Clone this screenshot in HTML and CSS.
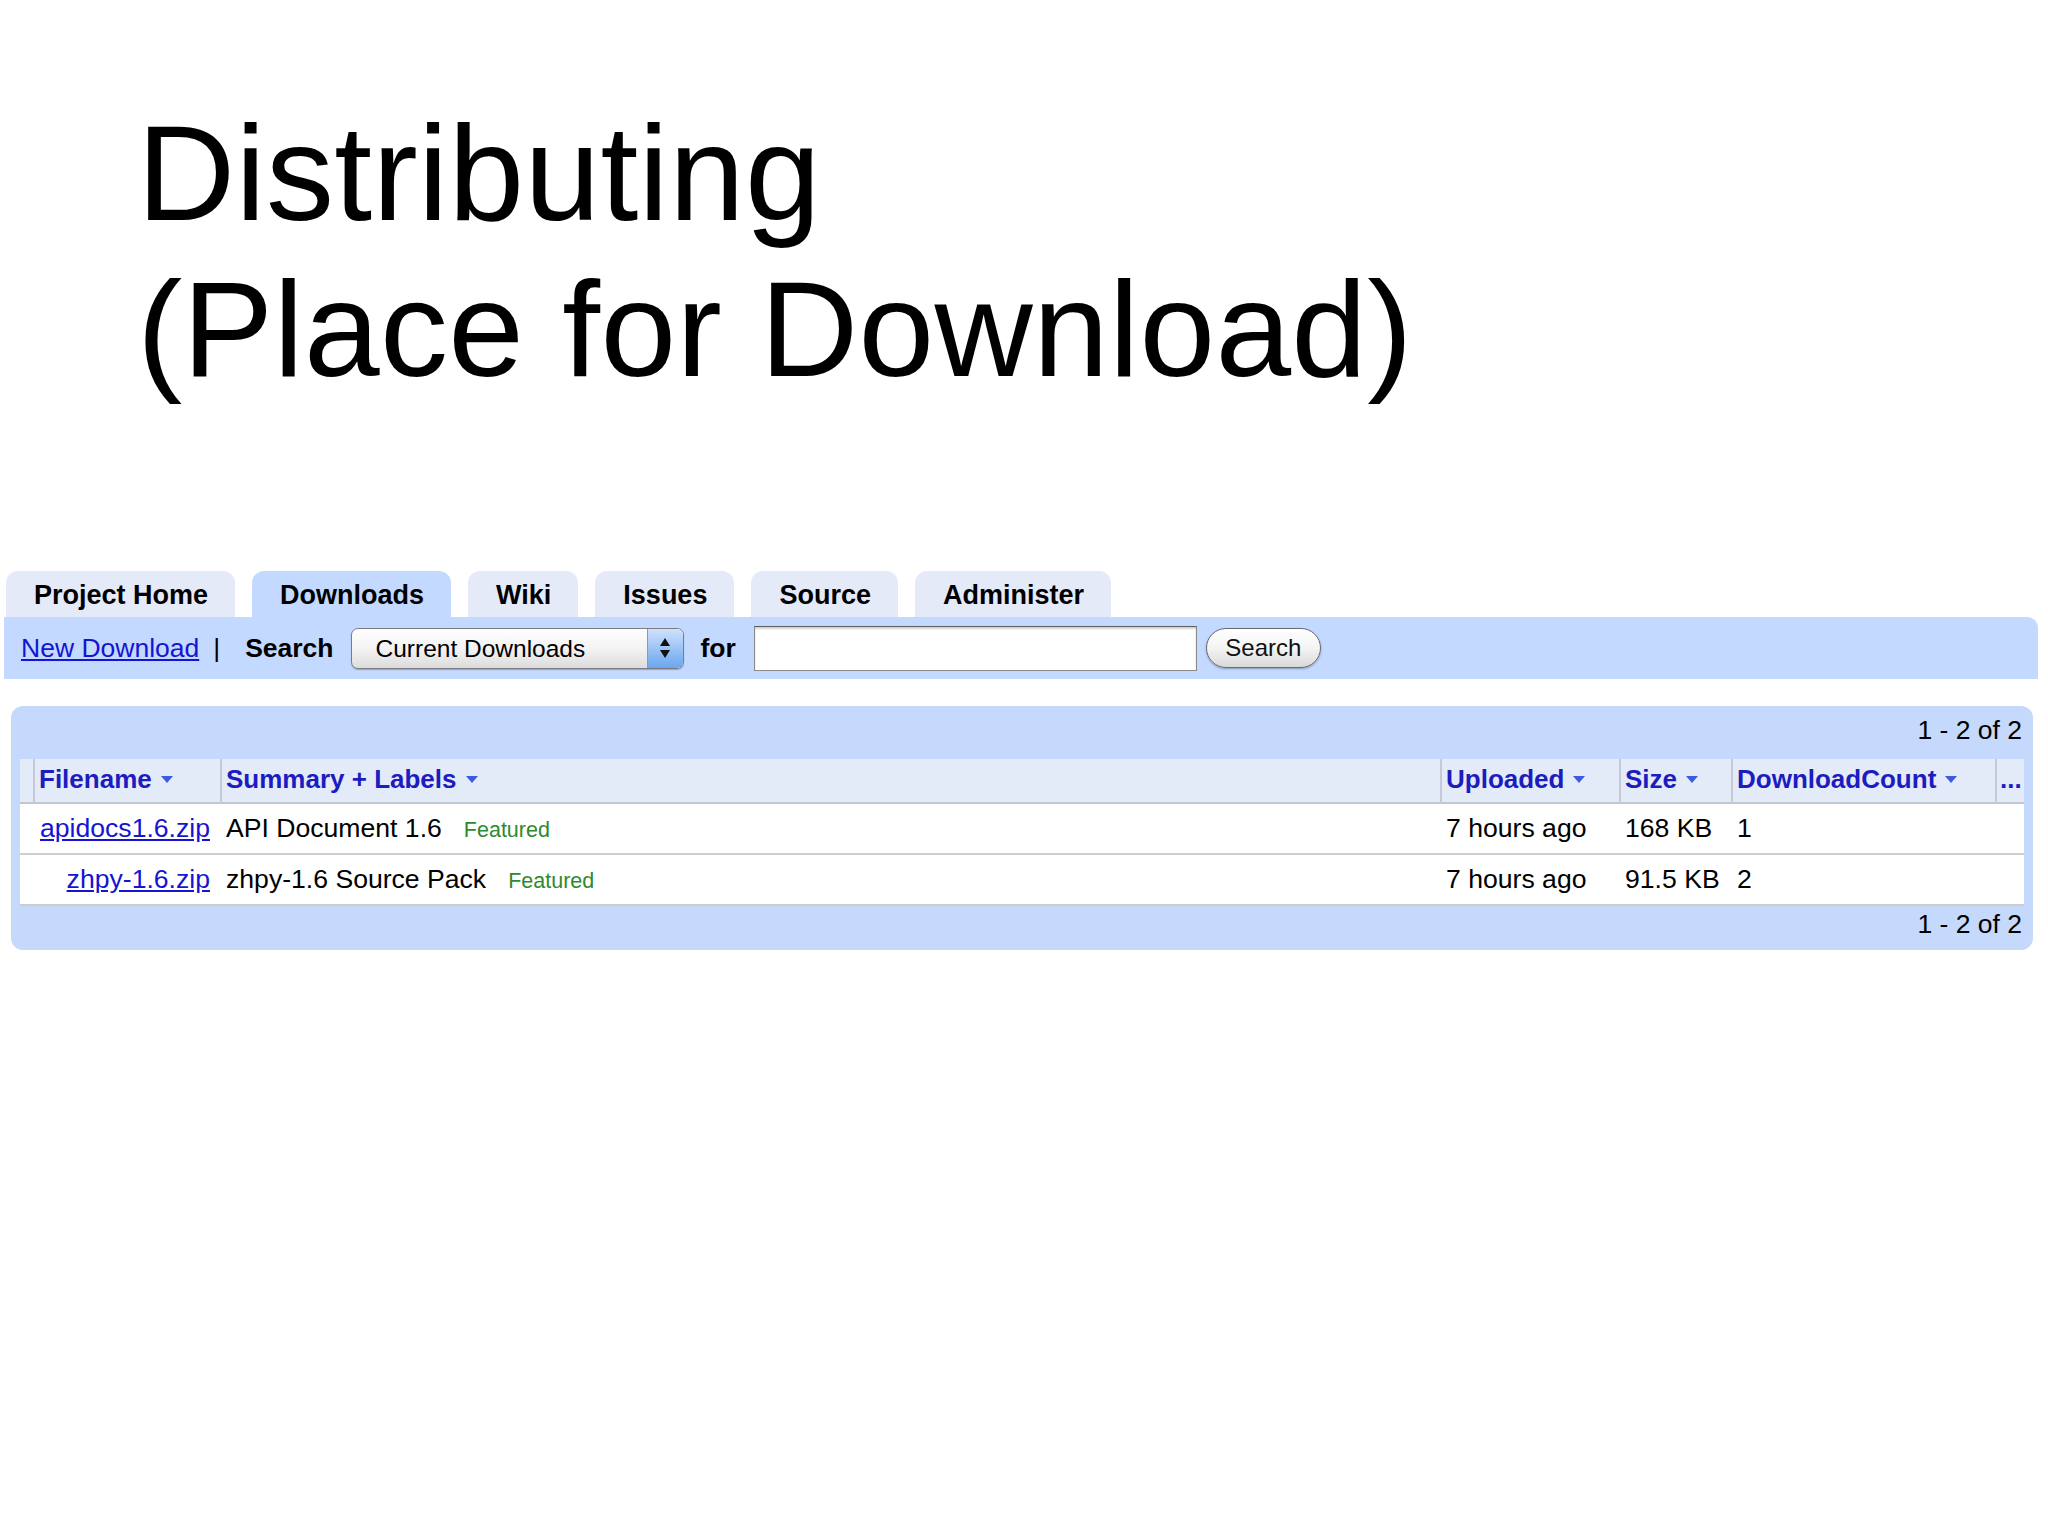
FILE: index.html
```html
<!DOCTYPE html>
<html>
<head>
<meta charset="utf-8">
<title>Distributing</title>
<link rel="stylesheet" href="styles.css">
</head>
<body>
<h1 class="title">Distributing<br>(Place for Download)</h1>

<div class="project">
  <div class="tabs">
    <div class="tab">Project Home</div>
    <div class="tab active">Downloads</div>
    <div class="tab">Wiki</div>
    <div class="tab">Issues</div>
    <div class="tab">Source</div>
    <div class="tab">Administer</div>
  </div>
  <div class="bar">
    <a class="link" href="#">New Download</a>
    <span class="sep">|</span>
    <span class="label">Search</span>
    <div class="select">
      <span class="select-text">Current Downloads</span>
      <span class="select-arrows"><span class="up"></span><span class="down"></span></span>
    </div>
    <span class="label for">for</span>
    <input class="query" type="text">
    <button class="btn">Search</button>
  </div>
</div>

<div class="panel">
  <div class="pager top">1 - 2 of 2</div>
  <table class="results">
    <colgroup>
      <col class="w-blank">
      <col class="w-file">
      <col class="w-sum">
      <col class="w-up">
      <col class="w-size">
      <col class="w-count">
      <col class="w-more">
    </colgroup>
    <thead>
      <tr>
        <th class="c-blank"></th>
        <th class="c-file"><span class="sort">Filename</span></th>
        <th class="c-sum"><span class="sort">Summary + Labels</span></th>
        <th class="c-up"><span class="sort">Uploaded</span></th>
        <th class="c-size"><span class="sort">Size</span></th>
        <th class="c-count"><span class="sort">DownloadCount</span></th>
        <th class="c-more">...</th>
      </tr>
    </thead>
    <tbody>
      <tr>
        <td class="c-blank"></td>
        <td class="c-file"><a class="link" href="#">apidocs1.6.zip</a></td>
        <td class="c-sum">API Document 1.6<span class="tag">Featured</span></td>
        <td class="c-up">7 hours ago</td>
        <td class="c-size">168 KB</td>
        <td class="c-count">1</td>
        <td class="c-more"></td>
      </tr>
      <tr>
        <td class="c-blank"></td>
        <td class="c-file"><a class="link" href="#">zhpy-1.6.zip</a></td>
        <td class="c-sum">zhpy-1.6 Source Pack<span class="tag">Featured</span></td>
        <td class="c-up">7 hours ago</td>
        <td class="c-size">91.5 KB</td>
        <td class="c-count">2</td>
        <td class="c-more"></td>
      </tr>
    </tbody>
  </table>
  <div class="pager bottom">1 - 2 of 2</div>
</div>
</body>
</html>
```

FILE: styles.css
```css
html, body {
  margin: 0;
  padding: 0;
  background: #ffffff;
}

body {
  font-family: "Liberation Sans", Arial, sans-serif;
  color: #000;
}

.title {
  margin: 95px 0 0 137px;
  font-size: 136px;
  line-height: 156px;
  font-weight: normal;
  letter-spacing: 0.3px;
}

/* ---------- project header ---------- */
.project {
  margin: 164px 0 0 4px;
  width: 2034px;
}

.tabs {
  display: flex;
  gap: 17px;
  padding-left: 2px;
}

.tab {
  height: 44px;
  padding: 2px 27px 0 28px;
  line-height: 44px;
  font-size: 27px;
  font-weight: bold;
  background: #e4eaf8;
  border-radius: 12px 12px 0 0;
}

.tab.active {
  background: #c3d9ff;
}

.bar {
  display: flex;
  align-items: center;
  height: 62px;
  padding-left: 17px;
  background: #c3d9ff;
  border-radius: 0 11px 0 0;
  font-size: 26.5px;
}

.link {
  color: #1414d2;
  text-decoration: underline;
}

.sep {
  margin: 0 25px 0 14px;
}

.label {
  font-weight: bold;
}

.select {
  display: flex;
  align-items: stretch;
  box-sizing: border-box;
  width: 333px;
  height: 41px;
  margin-left: 17px;
  border: 1px solid #7d7d80;
  border-radius: 7px;
  background: linear-gradient(#ffffff 0%, #f3f3f3 50%, #dcdcdc 100%);
  box-shadow: 0 1px 1px rgba(0,0,0,0.25);
  overflow: hidden;
}

.select-text {
  flex: 1;
  padding-left: 24px;
  font-size: 24.5px;
  line-height: 39px;
}

.select-arrows {
  width: 35px;
  display: flex;
  flex-direction: column;
  align-items: center;
  justify-content: center;
  gap: 4px;
  border-left: 1px solid #7f9cc6;
  background: linear-gradient(#cfe2fb 0%, #9cc4f4 50%, #6ba6ee 100%);
}

.up {
  width: 0;
  height: 0;
  border-left: 5px solid transparent;
  border-right: 5px solid transparent;
  border-bottom: 8px solid #111;
}

.down {
  width: 0;
  height: 0;
  border-left: 5px solid transparent;
  border-right: 5px solid transparent;
  border-top: 8px solid #111;
}

.for {
  margin-left: 17px;
}

.query {
  box-sizing: border-box;
  width: 443px;
  height: 45px;
  margin: 0 0 0 18px;
  padding: 0 6px;
  border: 1px solid #8a8a8a;
  border-top-color: #5d5d5d;
  background: #ffffff;
  box-shadow: inset 0 2px 2px rgba(0,0,0,0.18);
  font-size: 24px;
}

.btn {
  box-sizing: border-box;
  width: 115px;
  height: 40px;
  margin-left: 9px;
  padding: 0;
  border: 1px solid #6b6b6e;
  border-radius: 20px;
  background: linear-gradient(#ffffff 0%, #f4f4f4 50%, #d9d9d9 100%);
  box-shadow: 0 1px 2px rgba(0,0,0,0.3);
  font-family: "Liberation Sans", Arial, sans-serif;
  font-size: 24px;
  color: #111;
}

/* ---------- results panel ---------- */
.panel {
  box-sizing: border-box;
  width: 2022px;
  margin: 27px 0 0 11px;
  padding: 0 9px;
  background: #c5d9fd;
  border-radius: 12px;
  font-size: 26.5px;
}

.pager {
  text-align: right;
  line-height: 30px;
  padding-right: 2px;
}

.pager.top {
  padding-top: 9px;
  padding-bottom: 14px;
}

.pager.bottom {
  padding-top: 3px;
  padding-bottom: 11px;
}

.results {
  width: 2004px;
  border-collapse: separate;
  border-spacing: 0;
  table-layout: fixed;
}

.w-blank { width: 13px; }
.w-file  { width: 187px; }
.w-sum   { width: 1220px; }
.w-up    { width: 179px; }
.w-size  { width: 112px; }
.w-count { width: 264px; }
.w-more  { width: 29px; }

.results th,
.results td {
  padding: 0 6px;
  text-align: left;
  vertical-align: middle;
  white-space: nowrap;
  overflow: hidden;
  font-size: 26.6px;
}

.results th {
  height: 40px;
  padding: 0 4px 3px;
  background: #e3eaf8;
  border-bottom: 2px solid #c3c6cf;
  border-left: 2px solid #c4c9d5;
  color: #1c1cc0;
  font-weight: bold;
  font-size: 26px;
}

.results th.c-blank {
  border-left: none;
}

.results td {
  height: 49px;
  background: #ffffff;
  border-bottom: 2px solid #cdcdcf;
}

.results .c-blank {
  padding: 0;
}

.results td.c-file {
  text-align: right;
  padding-right: 10px;
}

.results th.c-more {
  padding: 0 3px 3px;
  overflow: visible;
}

.sort::after {
  content: "";
  display: inline-block;
  width: 0;
  height: 0;
  margin-left: 9px;
  vertical-align: 5px;
  border-left: 6px solid transparent;
  border-right: 6px solid transparent;
  border-top: 7px solid #3a5be0;
}

.tag {
  margin-left: 22px;
  font-size: 21.5px;
  color: #2f8a2f;
}
```
